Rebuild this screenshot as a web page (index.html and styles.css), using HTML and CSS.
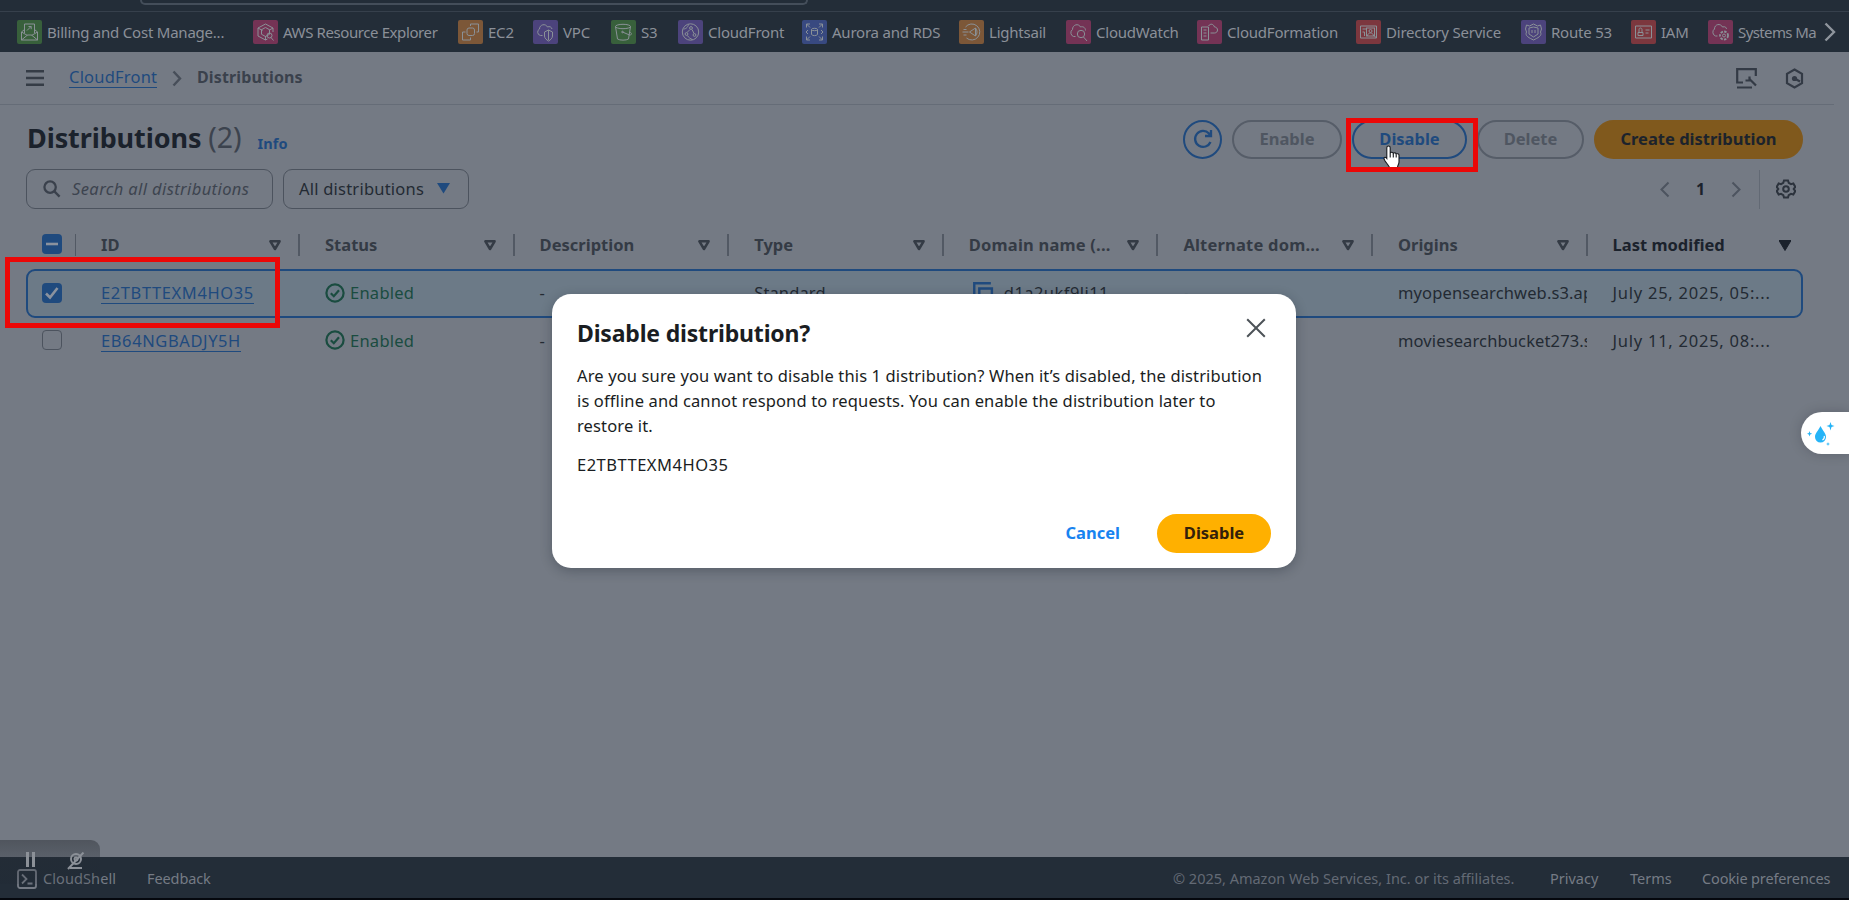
FILE: index.html
```html
<!DOCTYPE html>
<html lang="en">
<head>
<meta charset="utf-8">
<title>CloudFront | Distributions</title>
<link rel="stylesheet" href="styles.css">
</head>
<body>
<svg width="0" height="0" class="defs" aria-hidden="true">
  <defs>
    <symbol id="sort" viewBox="0 0 12 11"><path d="M1.4 1.300h9.200L6 9z" fill="none" stroke="currentColor" stroke-width="2.500" stroke-linejoin="round"/></symbol>
    <symbol id="ok" viewBox="0 0 20 20"><circle cx="10" cy="10" r="8.600" fill="none" stroke="currentColor" stroke-width="2.200"/><path d="M5.800 10.200l3 3 5.200-6" fill="none" stroke="currentColor" stroke-width="2.200"/></symbol>
    <symbol id="copy" viewBox="0 0 20 20"><path d="M1.200 14V1.200H17M6 6.200h12v12H6z" fill="none" stroke="currentColor" stroke-width="2.300"/></symbol>
  </defs>
</svg>
<header class="topnav"><div class="topsearch"></div></header>
<nav class="favorites">
  <a class="fav f1"><svg class="tile green" viewBox="0 0 24 24"><path d="M4 12v8h16v-8M4 20l6-5h4l6 5M4 12l6 3.500M20 12l-6 3.500M4 12l3-2.500M20 12l-3-2.500M7 13V4h10v9M9.500 10.500l4-4M11 6.500h2.700v2.700"/></svg><span>Billing and Cost Manage...</span></a>
  <a class="fav f2"><svg class="tile pink" viewBox="0 0 24 24"><path d="M19.500 12V8L12 4 4.500 8v8l7.500 4 2-1M4.500 8L9 10.500M19.500 8L16 10M12 16v4"/><path d="M12 7.500l4 2.200v4.600l-4 2.200-4-2.200V9.700z"/><circle cx="16" cy="15.500" r="2.500"/><path d="M17.500 17.500l2.500 3"/></svg><span>AWS Resource Explorer</span></a>
  <a class="fav f3"><svg class="tile orange" viewBox="0 0 24 24"><rect x="8.500" y="8" width="7.500" height="7.500" rx="2"/><path d="M7 12H4v8h8v-2.500M12 6V4h8v8h-2"/></svg><span>EC2</span></a>
  <a class="fav f4"><svg class="tile purple" viewBox="0 0 24 24"><path d="M9 15.500H7a3.500 3.500 0 0 1-1-6.500C6 4.500 12 3 14 7c2-1 4 0 4.500 2M11 12l4-2 4 2v4c0 2-2 4-4 5-2-1-4-3-4-5zM15 10v10"/></svg><span>VPC</span></a>
  <a class="fav f5"><svg class="tile green" viewBox="0 0 24 24"><ellipse cx="11.500" cy="6.500" rx="7.500" ry="2.200"/><path d="M4 6.500l2 12.500c2 1.500 9 1.500 11 0l2-12.500M11 12l7 3c3 0 2-2 .5-3"/><circle cx="11" cy="12" r=".8"/></svg><span>S3</span></a>
  <a class="fav f6"><svg class="tile purple" viewBox="0 0 24 24"><circle cx="12" cy="12" r="8.200"/><circle cx="12.500" cy="8" r="1.400"/><circle cx="8" cy="14" r="1.400"/><circle cx="16" cy="15" r="1.400"/><path d="M11.500 9.500l-3 3M13.500 9.500l2 4M5 9c2 0 4-1 5-4.500M9 15.500c1 2 3 3.500 5 4"/></svg><span>CloudFront</span></a>
  <a class="fav f7"><svg class="tile blue" viewBox="0 0 24 24"><path d="M4 7.500V4h3.500M4 4l3.500 3.500M16.500 4H20v3.500M20 4l-3.500 3.500M4 16.500V20h3.500M4 20l3.500-3.500M20 16.500V20h-3.500M20 20l-3.500-3.500M5.500 10l-2 2 2 2M18.500 10l2 2-2 2M9 9.500v5c1.500 1.500 4.500 1.500 6 0v-5"/><ellipse cx="12" cy="9.500" rx="3" ry="1.200"/></svg><span>Aurora and RDS</span></a>
  <a class="fav f8"><svg class="tile orange" viewBox="0 0 24 24"><path d="M6 7a8 8 0 1 1 1 11M3 12h6M4 9.500h3M4 15h3"/><path d="M10 12l6-4v8zM16 8c2 2 2 6 0 8"/></svg><span>Lightsail</span></a>
  <a class="fav f9"><svg class="tile pink" viewBox="0 0 24 24"><path d="M9 16.500H7a4 4 0 0 1-1-7C6 4.500 12 3 14 7c3-1 5 1 5 3.500"/><circle cx="14.500" cy="14" r="3.700"/><path d="M17 17l3.500 4"/></svg><span>CloudWatch</span></a>
  <a class="fav f10"><svg class="tile pink" viewBox="0 0 24 24"><path d="M4 7h7v13H4zM6 10h3M6 13h3M6 16h3M11 6c2-3 5-2 6 1 4 0 4 6 0 6h-4"/></svg><span>CloudFormation</span></a>
  <a class="fav f11"><svg class="tile red" viewBox="0 0 24 24"><path d="M4 6h16v12H4zM6 9h4M6 12h2v4M20 18l-3-3"/><rect x="10" y="8" width="8" height="8"/><circle cx="14" cy="11" r="1.500"/><path d="M11 16c0-4 6-4 6 0"/></svg><span>Directory Service</span></a>
  <a class="fav f12"><svg class="tile purple" viewBox="0 0 24 24"><path d="M5 5l3 1 4-2 4 2 3-1 1 4-1 3c2 4-3 6-7 8-4-2-9-4-7-8L4 9z"/><path d="M7.500 8l4.500-1 4.500 1v6L12 17l-4.500-3zM10.500 10v3M13.500 10v3"/></svg><span>Route 53</span></a>
  <a class="fav f13"><svg class="tile red" viewBox="0 0 24 24"><path d="M4 6h16v12H4zM14 10h4M14 13h3M6.500 15.500v-3h5v3zM7.500 12V9.500c0-2 3-2 3 0V12"/></svg><span>IAM</span></a>
  <a class="fav f14"><svg class="tile pink" viewBox="0 0 24 24"><path d="M9 16H7a4 4 0 0 1-1-7C6 4 12 3 14 7c3-1 4 1 4 2"/><circle cx="15.500" cy="15.500" r="1.500"/><circle cx="15.500" cy="15.500" r="4" stroke-dasharray="2.500 1.200" stroke-width="1.800"/></svg><span>Systems Ma</span></a>
  <svg class="favnext" viewBox="0 0 12 20"><path d="M1.500 1.500L10 10l-8.500 8.500"/></svg>
</nav>
<main class="content">
  <div class="crumbs">
    <svg class="burger" viewBox="0 0 18 16"><path d="M0 1.300h18M0 8h18M0 14.700h18"/></svg>
    <a class="crumb-link">CloudFront</a>
    <svg class="crumb-sep" viewBox="0 0 10 17"><path d="M1.500 1.500l6.500 7-6.500 7"/></svg>
    <span class="crumb-cur">Distributions</span>
    <svg class="tool t1" viewBox="0 0 21 21"><path d="M7 14.500H1.200V1.200h18.600V8M1 19.500h15M20 17.500l-6-6M9.500 12.500h4v-4M13.500 12.500l1.500-1.500"/></svg>
    <svg class="tool t2" viewBox="0 0 20 21"><path d="M10 1.500l7.500 4.300v9.400L10 19.500l-7.500-4.300V5.800z"/><circle cx="10" cy="10.500" r="2.600" fill="currentColor" stroke="none"/><path d="M10 10.500l5.500 3"/></svg>
  </div>
  <div class="titlebar">
    <h1>Distributions <span>(2)</span></h1>
    <a class="info">Info</a>
    <div class="actions">
      <button class="btn refresh"><svg viewBox="0 0 22 22"><path d="M18.500 14A8 8 0 1 1 17 5.500l1.500 2M19 2v6h-6"/></svg></button>
      <button class="btn off enable">Enable</button>
      <button class="btn disable">Disable</button>
      <button class="btn off delete">Delete</button>
      <button class="btn create">Create distribution</button>
    </div>
  </div>
  <div class="filters">
    <div class="field"><svg class="glass" viewBox="0 0 19 19"><circle cx="7.500" cy="7.500" r="6"/><path d="M12 12l5.500 5.500"/></svg><span>Search all distributions</span></div>
    <div class="select"><span>All distributions</span><svg viewBox="0 0 13 11"><path d="M0 0h13L6.500 10.500z"/></svg></div>
    <div class="pager">
      <svg class="chev" viewBox="0 0 10 17"><path d="M8.500 1.500l-7 7 7 7"/></svg>
      <b>1</b>
      <svg class="chev" viewBox="0 0 10 17"><path d="M1.500 1.500l7 7-7 7"/></svg>
      <i></i>
      <svg class="gear" viewBox="0 0 20 20"><path d="M8 1.500h4l.7 2.300 2.300 1.300 2.300-.6 2 3.400L17.700 10l1.600 2.100-2 3.400-2.300-.6-2.300 1.300-.7 2.300H8l-.7-2.300L5 14.900l-2.300.6-2-3.400L2.300 10 .7 7.900l2-3.400 2.300.6 2.300-1.300z"/><circle cx="10" cy="10" r="2.800"/></svg>
    </div>
  </div>
  <div class="table">
    <div class="row head">
      <div class="ck"><span class="box on"><svg viewBox="0 0 20 20"><path d="M4 10h12"/></svg></span></div>
      <div class="c1">ID<svg class="s"><use href="#sort"/></svg></div>
      <div>Status<svg class="s"><use href="#sort"/></svg></div>
      <div>Description<svg class="s"><use href="#sort"/></svg></div>
      <div>Type<svg class="s"><use href="#sort"/></svg></div>
      <div class="wide">Domain name (...<svg class="s"><use href="#sort"/></svg></div>
      <div class="wide">Alternate dom...<svg class="s"><use href="#sort"/></svg></div>
      <div>Origins<svg class="s"><use href="#sort"/></svg></div>
      <div class="last">Last modified<svg class="s" viewBox="0 0 12 11"><path d="M0 .5h12L6 10.500z" fill="currentColor"/></svg></div>
    </div>
    <div class="row sel">
      <div class="ck"><span class="box on"><svg viewBox="0 0 20 20"><path d="M4 10.500l4 4 7.500-9.500"/></svg></span></div>
      <div class="c1"><a>E2TBTTEXM4HO35</a></div>
      <div class="ok"><svg><use href="#ok"/></svg>Enabled</div>
      <div>-</div>
      <div>Standard</div>
      <div class="dom"><svg><use href="#copy"/></svg>d1a2ukf9lj11</div>
      <div>-</div>
      <div class="org"><span>myopensearchweb.s3.ap</span></div>
      <div class="date">July 25, 2025, 05:...</div>
    </div>
    <div class="row second">
      <div class="ck"><span class="box"></span></div>
      <div class="c1"><a>EB64NGBADJY5H</a></div>
      <div class="ok"><svg><use href="#ok"/></svg>Enabled</div>
      <div>-</div>
      <div></div>
      <div></div>
      <div></div>
      <div class="org"><span>moviesearchbucket273.s</span></div>
      <div class="date">July 11, 2025, 08:...</div>
    </div>
  </div>
</main>
<footer class="footer">
  <svg class="shell" viewBox="0 0 20 20"><rect x="1" y="1" width="18" height="18" rx="2"/><path d="M5 5.500l4.500 4.500L5 14.500M10.500 14.500h5"/></svg>
  <span class="cs">CloudShell</span><span class="fb">Feedback</span>
  <span class="cp">© 2025, Amazon Web Services, Inc. or its affiliates.</span>
  <span class="pv">Privacy</span><span class="tm">Terms</span><span class="ckp">Cookie preferences</span>
</footer>
<div class="recorder">
  <svg class="pause" viewBox="0 0 12 16"><path d="M2.500 0v15M8.500 0v15"/></svg>
  <svg class="cam" viewBox="0 0 18 18"><circle cx="9" cy="7" r="5"/><circle cx="9" cy="7" r="1.500"/><path d="M3 16h12M16.500.5L1 17"/></svg>
</div>
<section class="modal">
  <div class="modal-head"><h2>Disable distribution?</h2><svg viewBox="0 0 20 20"><path d="M1.200 1.200l17.600 17.600M18.800 1.200L1.200 18.800"/></svg></div>
  <p>Are you sure you want to disable this 1 distribution? When it’s disabled, the distribution<br>is offline and cannot respond to requests. You can enable the distribution later to<br>restore it.</p>
  <p class="mid">E2TBTTEXM4HO35</p>
  <div class="modal-foot"><a>Cancel</a><button class="btn confirm">Disable</button></div>
</section>
<svg class="hand" viewBox="0 0 19 22"><path d="M5.500 1c1.200 0 1.700.8 1.700 1.800V8c.3-1.200 2.900-1 3.100.3.600-.8 2.700-.6 2.900.7.800-.6 2.800-.2 2.800 1.200V17c0 2.500-1.500 3.500-1.500 5.500H6.500C5.500 19.500 1 16 1 13.500c0-1.500 1.500-1.700 2.800 0V2.800C3.800 1.800 4.300 1 5.500 1z"/><path d="M7.200 8v4.500M10.300 8.500V12.500M13.200 9.500v3"/></svg>
<div class="mark m1"></div>
<div class="mark m2"></div>
<div class="drop"><svg viewBox="0 0 28 26"><path d="M13.500 5c2 4.500 5.500 7 5.500 11a5.500 5.500 0 0 1-11 0c0-4 3.500-6.500 5.500-11z"/><path d="M23.500 1l1 3 3 1-3 1-1 3.500-1-3.500-3-1 3-1zM2.500 10l.7 2 2 .7-2 .7-.7 2-.7-2-2-.7 2-.7zM21 21l.5 1.500 1.500.5-1.500.5L21 25l-.5-1.500L19 23l1.500-.5z"/><path class="shine" d="M17.200 15c.5 2-.3 3.300-1.800 4" /></svg></div>
</body>
</html>
```
FILE: styles.css
```css
* { box-sizing: border-box; }
body { margin: 0; width: 1849px; height: 900px; overflow: hidden; display: flex; flex-direction: column; background: #747a84; font-family: "Noto Sans", "Open Sans", sans-serif; font-size: 16.5px; letter-spacing: .13px; color: #232a33; position: relative; }
svg { fill: none; stroke: currentColor; flex: none; display: block; }
.defs { position: absolute; }
.topnav { height: 12px; background: #232d38; border-bottom: 1px solid #36404c; flex: none; padding-left: 140px; }
.topsearch { width: 668px; height: 5px; border: 2px solid #444e5a; border-top: 0; border-radius: 0 0 7px 7px; }
.favorites { height: 40px; flex: none; background: #232d38; display: flex; align-items: center; padding-left: 17px; font-size: 15px; letter-spacing: -.22px; color: #8b9098; }
.fav { display: flex; align-items: center; gap: 5px; height: 24px; flex: none; white-space: nowrap; }
.tile { width: 25px; height: 24px; border-radius: 2px; stroke: #8a9197; stroke-width: 1; }
.green { background: #38603b; }
.pink { background: #743355; }
.orange { background: #7c5738; }
.purple { background: #4c437c; }
.blue { background: #384980; }
.red { background: #7c373e; }
.f1 { width: 236px; } .f2 { width: 205px; letter-spacing: -.4px; } .f3 { width: 75px; } .f4 { width: 78px; } .f5 { width: 67px; }
.f6 { width: 124px; } .f7 { width: 157px; } .f8 { width: 107px; } .f9 { width: 131px; } .f10 { width: 159px; }
.f11 { width: 165px; } .f12 { width: 110px; } .f13 { width: 77px; } .f14 { width: 107px; letter-spacing: -.6px; }
.favnext { width: 12px; height: 20px; margin-left: 9px; stroke: #8f959d; stroke-width: 2.4; }
.content { flex: 1; padding-right: 46px; }
.crumbs { height: 53px; width: 1834px; border-bottom: 1px solid #656c77; display: flex; align-items: center; padding-left: 26px; font-size: 16px; }
.burger { width: 18px; height: 16px; stroke: #353c46; stroke-width: 2.4; }
.crumb-link { margin-left: 25px; width: 88px; font-size: 16.5px; letter-spacing: .2px; color: #1f4a7e; border-bottom: 1px solid #1f4a7e; line-height: 20px; white-space: nowrap; margin-top: -1px; }
.crumb-sep { width: 10px; height: 17px; margin: 0 15px 0 15px; stroke: #474e59; stroke-width: 2.4; }
.crumb-cur { font-weight: 700; color: #3a414c; margin-top: -3px; }
.tool { width: 21px; height: 21px; stroke: #333a45; color: #333a45; stroke-width: 2.2; }
.t1 { margin-left: auto; } .t2 { margin: 0 29px 0 27px; }
.titlebar { height: 64px; display: flex; align-items: center; padding: 4px 0 0 27px; }
h1 { margin: 0; font-size: 27px; line-height: 38px; letter-spacing: -.1px; color: #1b222c; white-space: nowrap; margin-top: -3px; }
h1 span { font-weight: 400; font-size: 28.5px; color: #3c434e; }
.info { margin: 7px 0 0 16px; font-size: 14.5px; font-weight: 700; color: #1f4a7e; }
.actions { margin-left: auto; display: flex; gap: 10px; }
.btn { height: 39px; border-radius: 20px; border: 2px solid #1f4a7e; background: none; color: #1f4a7e; font: 700 16.5px "Noto Sans", sans-serif; letter-spacing: 0; padding: 0 0 2px; }
.refresh { width: 39px; display: flex; align-items: center; justify-content: center; padding: 0; }
.refresh svg { width: 22px; height: 22px; stroke-width: 2.3; }
.off { border-color: #565d68; color: #4f5661; }
.enable { width: 110px; } .disable { width: 115px; } .delete { width: 107px; }
.create { width: 209px; background: #80591d; border-color: #80591d; color: #1c232c; }
.filters { height: 40px; display: flex; gap: 10px; padding-left: 26px; }
.field, .select { border: 1px solid #4c535e; border-radius: 9px; height: 40px; display: flex; align-items: center; padding-bottom: 1px; }
.field { width: 247px; padding-left: 16px; font-style: italic; letter-spacing: .4px; color: #3d444f; white-space: nowrap; }
.glass { width: 18px; height: 18px; stroke: #3a414c; stroke-width: 2.4; margin-right: 11px; }
.select { width: 186px; padding: 0 18px 1px 15px; letter-spacing: .22px; justify-content: space-between; }
.select svg { width: 13px; height: 11px; fill: #1f4a7e; stroke: none; }
.pager { margin-left: auto; display: flex; align-items: center; color: #1b222c; font-size: 16px; }
.chev { width: 10px; height: 17px; stroke: #4d545f; stroke-width: 2; }
.pager b { margin: 0 26px; width: 9px; }
.pager i { width: 1px; height: 39px; background: #626974; margin: 0 16px 0 18px; }
.gear { width: 20px; height: 20px; margin-right: 7px; stroke: #2c333d; stroke-width: 2; }
.table { margin-left: 26px; width: 1777px; padding-top: 12px; white-space: nowrap; }
.row { height: 48px; display: grid; grid-template-columns: 75px 224px repeat(6, 214.6px) 1fr; align-items: center; }
.head { font-weight: 700; letter-spacing: 0; color: #343b45; }
.head > div { position: relative; height: 22px; line-height: 22px; }
.head > div::after { content: ""; position: absolute; right: 25px; top: 0; width: 2px; height: 22px; background: #525964; }
.head .ck::after { width: 1px; }
.head .wide { letter-spacing: .2px; }
.head .last::after { display: none; }
.head .s { position: absolute; right: 44px; top: 6px; width: 12px; height: 11px; }
.head .last { color: #1b222c; }
.head .last .s { right: 12px; }
.ck { padding-left: 16px; }
.box { display: block; width: 20px; height: 20px; border: 1px solid #4c535e; border-radius: 4px; }
.on { border: 0; background: #1f4a7e; }
.on svg { stroke: #8a929e; stroke-width: 2.6; width: 20px; height: 20px; }
.sel { height: 49px; border: 2px solid #1f4a7e; border-radius: 9px; background: #6c7a87; grid-template-columns: 73px 224px repeat(6, 214.6px) 1fr; padding-bottom: 2px; }
.sel .ck { padding-left: 14px; }
.second { height: 46px; padding-bottom: 2px; }
.row a { color: #1f4a7e; border-bottom: 1px solid #1f4a7e; line-height: 21px; letter-spacing: .6px; display: inline-block; }
.ok, .dom { display: flex; align-items: center; gap: 5px; }
.ok { color: #1a4c40; letter-spacing: .25px; }
.ok svg { width: 20px; height: 20px; }
.dom { letter-spacing: .45px; }
.dom svg { width: 21px; height: 21px; color: #1f4a7e; margin: 0 5px 0 4px; }
.org span { display: block; width: 189px; overflow: hidden; }
.date { letter-spacing: .75px; }
.footer { height: 43px; flex: none; background: #232d38; border-bottom: 2px solid #05080e; display: flex; align-items: center; padding: 0 19px 0 17px; font-size: 14.5px; letter-spacing: 0; color: #757b85; white-space: nowrap; }
.shell { width: 20px; height: 20px; stroke: #757b85; stroke-width: 1.8; margin: 3px 6px 0 0; }
.cs { width: 104px; letter-spacing: .1px; } .fb { letter-spacing: -.1px; } .cp { margin-left: auto; width: 377px; color: #636a75; } .pv { width: 80px; } .tm { width: 72px; } .ckp { width: 128px; letter-spacing: -.15px; }
.recorder { position: absolute; left: 0; top: 840px; width: 100px; height: 44px; border-radius: 0 9px 9px 0; background: linear-gradient(rgba(50,55,62,.55), rgba(35,42,50,.3) 45%, rgba(25,32,42,.1)); display: flex; gap: 30px; padding: 12px 0 0 25px; color: #8c9198; }
.pause { width: 12px; height: 16px; stroke-width: 3; }
.cam { width: 18px; height: 18px; stroke-width: 2; }
.modal { position: absolute; left: 552px; top: 294px; width: 744px; height: 274px; background: #fff; border-radius: 19px; padding: 21px 25px 15px; color: #1a1d22; display: flex; flex-direction: column; box-shadow: 0 3px 12px rgba(20,30,40,.3); }
.modal-head { display: flex; justify-content: space-between; height: 49px; }
h2 { margin: 0; font-size: 23px; line-height: 36px; letter-spacing: -.18px; white-space: nowrap; }
.modal-head svg { width: 20px; height: 20px; margin: 3px 5px 0 0; stroke: #4d5358; stroke-width: 2; }
.modal p { margin: 0; line-height: 24.8px; white-space: nowrap; }
.modal .mid { margin-top: 15px; letter-spacing: .5px; }
.modal-foot { margin-top: auto; display: flex; justify-content: flex-end; align-items: center; gap: 37px; color: #1783f0; font-weight: 700; letter-spacing: 0; }
.modal-foot a { padding-bottom: 2px; }
.confirm { width: 114px; background: #ffb000; border-color: #ffb000; color: #33210a; }
.mark { position: absolute; border: 5px solid #eb0707; }
.m1 { left: 5px; top: 257px; width: 275px; height: 71px; }
.m2 { left: 1346px; top: 118px; width: 132px; height: 54px; }
.hand { position: absolute; left: 1383px; top: 145px; width: 19px; height: 22px; fill: #fff; stroke: #15181d; stroke-width: 1.1; }
.drop { position: absolute; left: 1801px; top: 412px; width: 48px; height: 42px; border-radius: 21px 0 0 21px; background: #fff; padding: 9px 0 0 6px; box-shadow: 0 0 12px rgba(30,35,45,.25); }
.drop svg { width: 28px; height: 26px; fill: #25b4f7; stroke: none; }
.drop .shine { fill: none; stroke: #fff; stroke-width: 1.2; }
```
